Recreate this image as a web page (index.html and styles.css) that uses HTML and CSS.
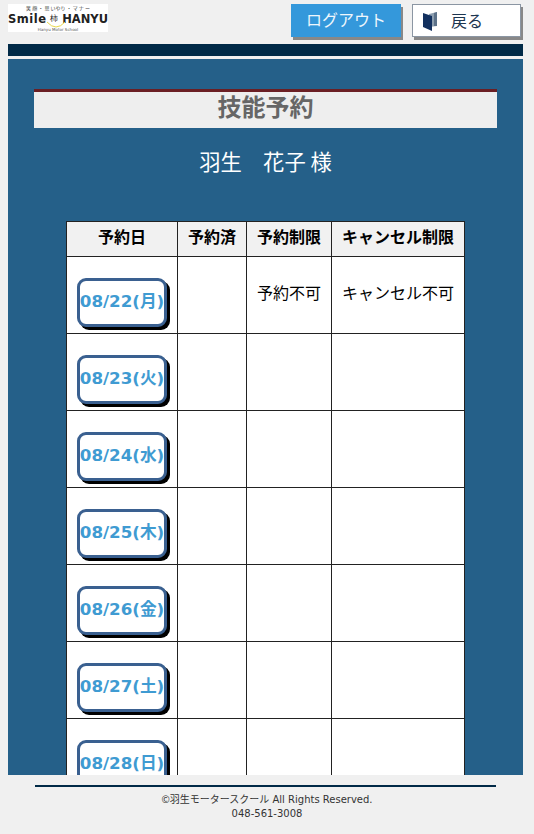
FILE: index.html
```html
<!DOCTYPE html>
<html lang="ja">
<head>
<meta charset="utf-8">
<title>技能予約</title>
<link rel="stylesheet" href="styles.css">
</head>
<body>
<header class="top">
  <div class="logo">
    <div class="logo-small">笑 顔 ・ 思 いやり ・ マ ナ ー</div>
    <div class="logo-main"><span class="logo-word">Smile</span><span class="logo-mark">柿<svg class="logo-smile" viewBox="0 0 20 8" width="20" height="8"><path d="M1 1 Q10 11 19 1" fill="none" stroke="#e8d84a" stroke-width="1"/></svg></span><span>HANYU</span></div>
    <div class="logo-tiny">Hanyu Motor School</div>
  </div>
  <div class="top-buttons">
    <a class="btn btn-logout">ログアウト</a>
    <a class="btn btn-back">
      <svg class="book" viewBox="0 0 15 20" width="15" height="20"><path d="M6 3 L14 1 V15 L6 16Z" fill="#8e9fb0"/><path d="M11 2 V15 L14 15 V1Z" fill="#5d7289"/><path d="M0 2 L9 5 V20 L0 16Z" fill="#12305f"/></svg>
      <span>戻る</span>
    </a>
  </div>
</header>
<div class="bar"></div>
<main class="panel">
  <h1 class="title">技能予約</h1>
  <p class="name">羽生　花子 様</p>
  <table class="grid">
    <thead>
      <tr><th class="c1">予約日</th><th class="c2">予約済</th><th class="c3">予約制限</th><th class="c4">キャンセル制限</th></tr>
    </thead>
    <tbody>
      <tr><td><a class="day">08/22(月)</a></td><td></td><td class="note">予約不可</td><td class="note">キャンセル不可</td></tr>
      <tr><td><a class="day">08/23(火)</a></td><td></td><td></td><td></td></tr>
      <tr><td><a class="day">08/24(水)</a></td><td></td><td></td><td></td></tr>
      <tr><td><a class="day">08/25(木)</a></td><td></td><td></td><td></td></tr>
      <tr><td><a class="day">08/26(金)</a></td><td></td><td></td><td></td></tr>
      <tr><td><a class="day">08/27(土)</a></td><td></td><td></td><td></td></tr>
      <tr><td><a class="day">08/28(日)</a></td><td></td><td></td><td></td></tr>
    </tbody>
  </table>
</main>
<footer class="foot">
  <div class="foot-rule"></div>
  <p class="foot-line"><span class="foot-jp">©羽生モータースクール</span> All Rights Reserved.</p>
  <p class="foot-line">048-561-3008</p>
</footer>
</body>
</html>
```
FILE: styles.css
```css
* { box-sizing: border-box; }
html, body { margin: 0; height: 100%; }
body {
  width: 534px;
  height: 834px;
  overflow: hidden;
  display: flex;
  flex-direction: column;
  background: #f0f0f0;
  font-family: "Noto Sans CJK JP", "DejaVu Sans", sans-serif;
  color: #000;
}
.top {
  height: 44px;
  flex: none;
  display: flex;
  justify-content: space-between;
  padding: 4px 13px 0 8px;
}
.logo {
  width: 100px;
  height: 28px;
  background: #fff;
  display: flex;
  flex-direction: column;
  align-items: center;
  overflow: hidden;
}
.logo-small {
  font-size: 5px;
  line-height: 7px;
  color: #444;
  white-space: nowrap;
}
.logo-main {
  width: 100%;
  display: flex;
  justify-content: space-between;
  align-items: center;
  margin-top: 1px;
  font-family: "DejaVu Sans", sans-serif;
  font-weight: bold;
  font-size: 11.5px;
  line-height: 14px;
  color: #222;
}
.logo-word { letter-spacing: 0.5px; }
.logo-mark {
  position: relative;
  font-size: 8px;
  font-weight: normal;
  width: 20px;
  text-align: center;
}
.logo-smile { position: absolute; left: 0; top: 9px; }
.logo-tiny {
  font-family: "DejaVu Sans", sans-serif;
  font-size: 4px;
  line-height: 5px;
  color: #555;
  margin-top: 1px;
}
.top-buttons { display: flex; gap: 11px; }
.btn {
  height: 33px;
  display: flex;
  align-items: center;
  font-size: 16px;
  line-height: 20px;
  box-shadow: 2px 3px 0 #888;
}
.btn-logout {
  width: 110px;
  background: #3498db;
  color: #eef6fc;
  justify-content: center;
  padding-bottom: 3px;
}
.btn-back {
  width: 109px;
  background: #fff;
  border: 1px solid #8b96a3;
  color: #1c3550;
  padding: 0 0 2px 10px;
  gap: 13px;
}
.book { flex: none; margin-top: 3px; }
.bar {
  height: 12px;
  flex: none;
  margin: 0 11px 0 8px;
  background: #012a47;
}
.panel {
  flex: none;
  height: 716px;
  margin: 3px 11px 0 8px;
  background: #256089;
  overflow: hidden;
  padding-top: 30px;
}
.title {
  margin: 0 26px;
  height: 39px;
  border-top: 3px solid #6b1f24;
  background: #eeeeee;
  color: #666;
  font-size: 24px;
  font-weight: 700;
  line-height: 28px;
  text-align: center;
}
.name {
  margin: 17px 0 0;
  height: 32px;
  color: #fff;
  font-size: 21.3px;
  line-height: 32px;
  text-align: center;
}
.grid {
  margin: 44px 0 0 58px;
  width: 399px;
  border-collapse: collapse;
  table-layout: fixed;
  background: #fff;
}
.grid th, .grid td { border: 1px solid #222; padding: 0; }
.grid th {
  height: 35px;
  background: #f1f1f1;
  font-size: 16px;
  font-weight: 700;
  line-height: 22px;
  padding-bottom: 6px;
  text-align: center;
}
.c1 { width: 111px; }
.c2 { width: 69px; }
.c3 { width: 85px; }
.c4 { width: 133px; }
.grid td { height: 77px; text-align: center; }
.grid td.note {
  font-size: 16px;
  vertical-align: top;
  padding-top: 22px;
  line-height: 26px;
}
.day {
  display: flex;
  align-items: center;
  justify-content: center;
  width: 90px;
  height: 49px;
  margin: 21px 0 6px 10px;
  border: 3px solid #3a6090;
  border-radius: 9px;
  background: #fff;
  box-shadow: 3px 3px 0 #000;
  color: #3f9bd2;
  font-family: "DejaVu Sans", "Noto Sans CJK JP", sans-serif;
  font-size: 16.7px;
  font-weight: 700;
  line-height: 20px;
  padding-bottom: 4px;
  white-space: nowrap;
}
.foot {
  flex: none;
  text-align: center;
  color: #333;
  font-family: "DejaVu Sans", "Noto Sans CJK JP", sans-serif;
  font-size: 10px;
}
.foot-jp { font-family: "Noto Sans CJK JP", sans-serif; font-size: 10px; }
.foot-rule {
  height: 2px;
  margin: 10px 38px 0 35px;
  background: #012a47;
}
.foot-line { margin: 0; height: 15px; line-height: 15px; }
.foot-rule + .foot-line { margin-top: 4px; }
```
